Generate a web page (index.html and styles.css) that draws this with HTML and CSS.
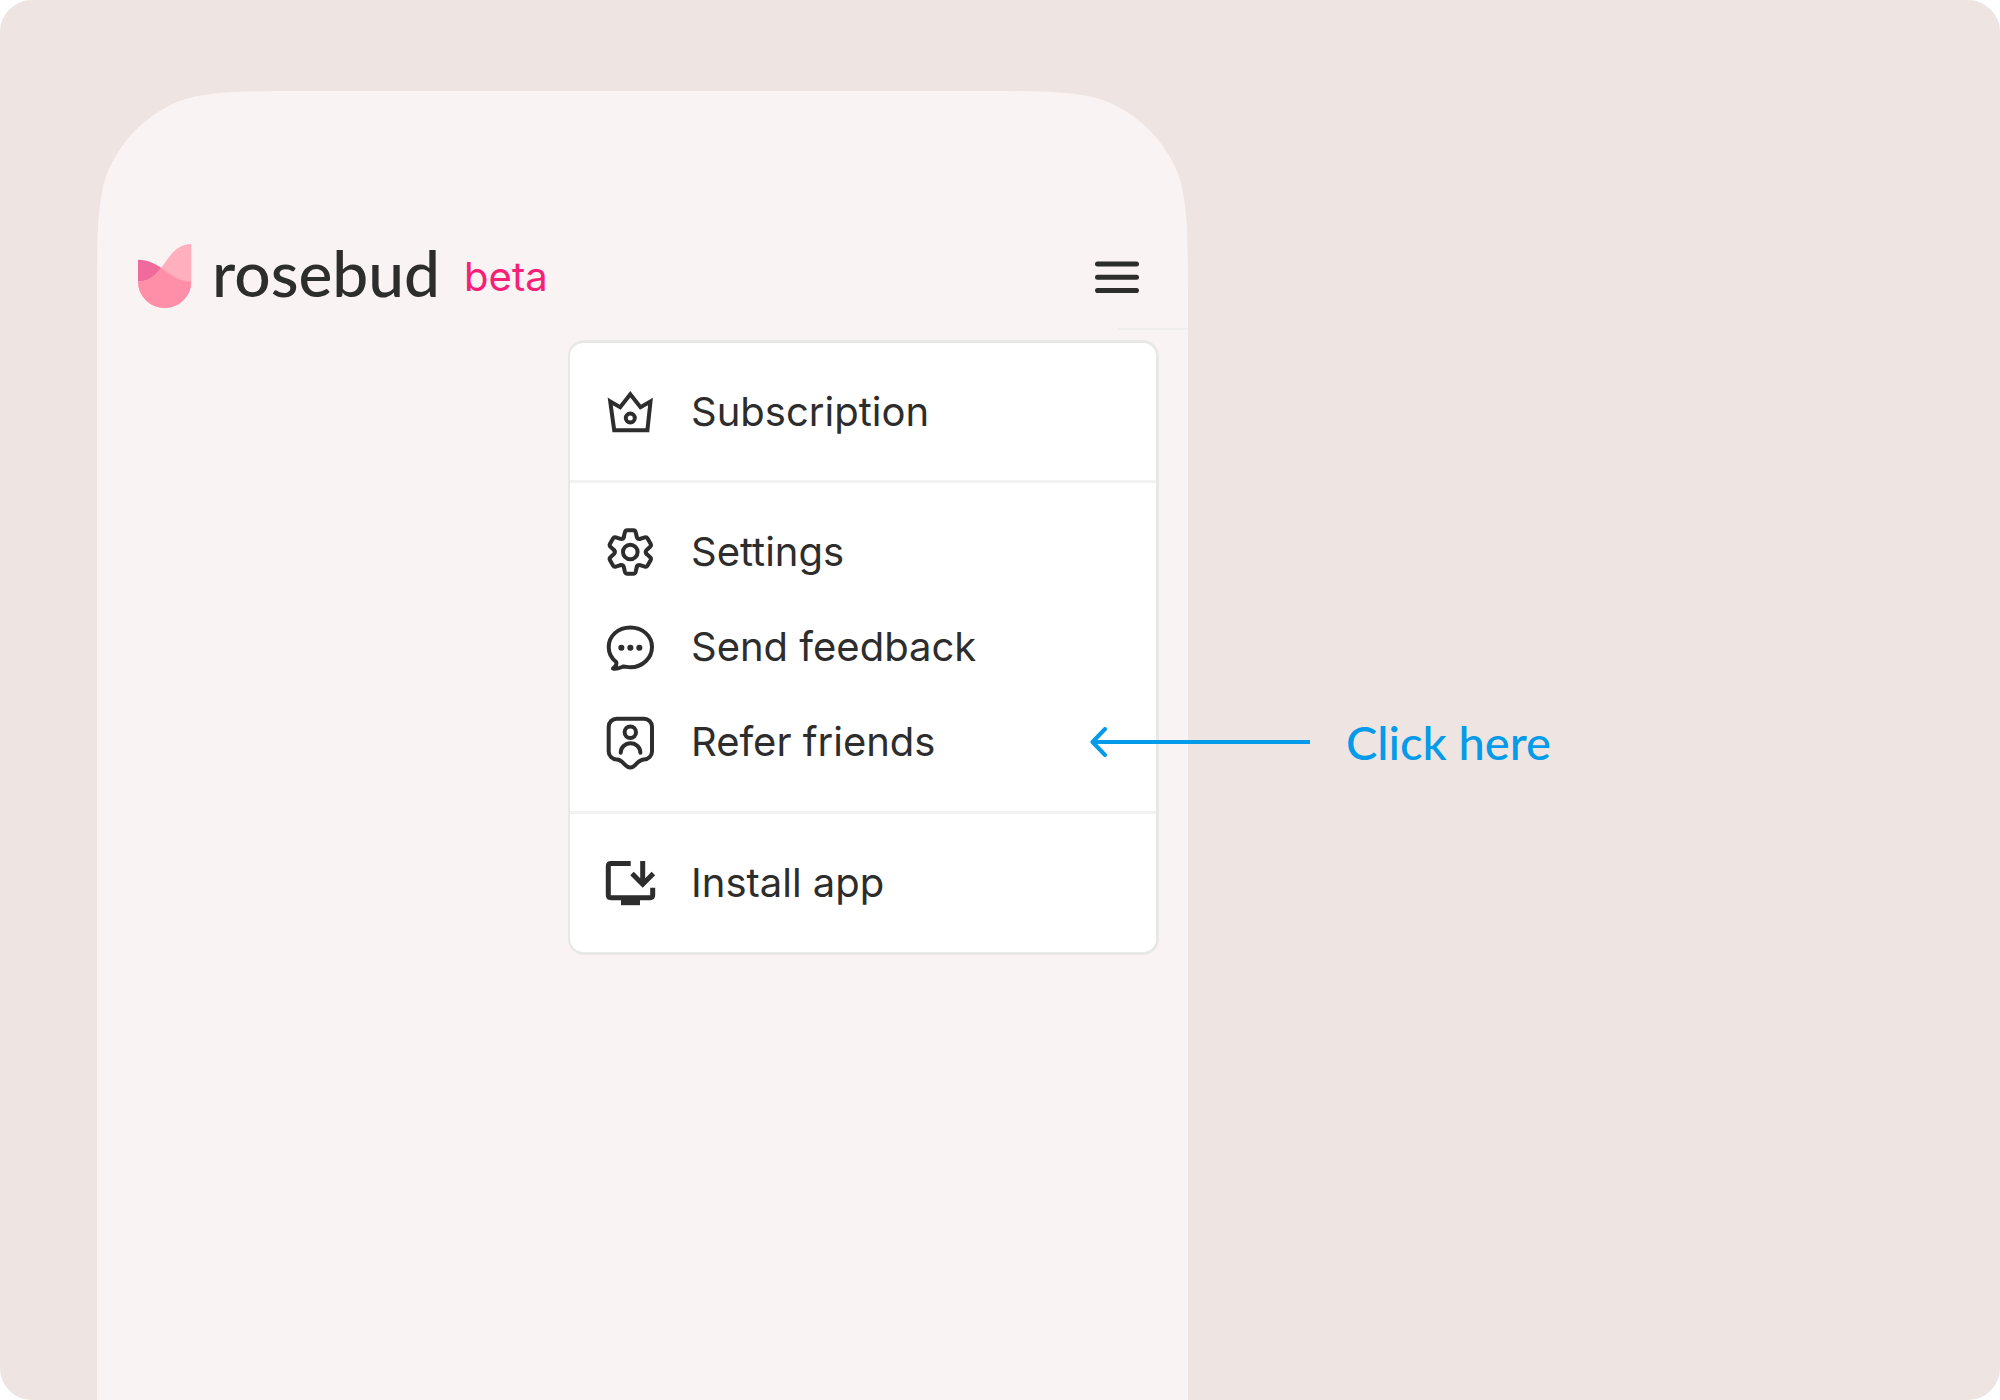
FILE: index.html
```
<!DOCTYPE html>
<html lang="en">
<head>
    <meta charset="UTF-8">
    <meta name="viewport" content="width=device-width, initial-scale=1.0">
    <title>Rosebud - Refer friends</title>
    <link rel="stylesheet" href="styles.css">
</head>
<body>
    <div class="stage">
        <div class="phone">
            <!-- Smooth phone corners -->
            <svg class="corner" viewBox="0 0 213 213" aria-hidden="true">
                <path d="M0 213C0 138.300 0 101 14.500 72.600A133 133 0 0 1 72.600 14.500C101 0 138.300 0 213 0H-2V213Z"/>
            </svg>
            <svg class="corner corner-right" viewBox="0 0 213 213" aria-hidden="true">
                <path d="M0 213C0 138.300 0 101 14.500 72.600A133 133 0 0 1 72.600 14.500C101 0 138.300 0 213 0H-2V213Z"/>
            </svg>

            <header class="header">
                <svg class="logo" viewBox="0 0 54 64" aria-hidden="true">
                    <defs>
                        <clipPath id="bud">
                            <path d="M53.300 0C27 0 27 37.500 0 37.500A26.650 26.500 0 0 0 53.300 37.500Z"/>
                        </clipPath>
                    </defs>
                    <path fill="#f06b9b" d="M0 15.800C24 15.800 30 37.500 53.300 37.500H0Z"/>
                    <path fill="#ffafbd" d="M53.300 0C27 0 27 37.500 0 37.500A26.650 26.500 0 0 0 53.300 37.500Z"/>
                    <path fill="#ff8fa8" clip-path="url(#bud)" d="M0 15.800C24 15.800 30 37.500 53.300 37.500V64H0Z"/>
                </svg>
                <span class="wordmark">rosebud</span>
                <span class="beta">beta</span>
                <button class="menu-button" type="button" aria-label="Menu">
                    <svg viewBox="0 0 44 32" aria-hidden="true">
                        <path d="M2.500 3H41.500M2.500 16.300H41.500M2.500 29.600H41.500"/>
                    </svg>
                </button>
            </header>

            <nav class="menu">
                <ul class="group">
                    <li class="item">
                        <button class="entry" type="button">
                            <svg class="icon crown" viewBox="0 0 48 48" aria-hidden="true">
                                <path d="M4.200 13.400L14.200 19.200L24.300 6.300L34.500 19.200L44.500 13.400L41.400 42.300H8.200Z"/>
                                <circle cx="24.300" cy="30" r="4.500"/>
                            </svg>
                            Subscription
                        </button>
                    </li>
                </ul>
                <ul class="group">
                    <li class="item">
                        <button class="entry" type="button">
                            <svg class="icon" viewBox="0 0 48 48" aria-hidden="true">
                                <defs>
                                    <path id="tooth" d="M-6.500 -15L-5.400 -19.800Q-4.900 -21.700 -3 -21.700H3Q4.900 -21.700 5.400 -19.800L6.500 -15Q7.400 -12.600 9.700 -13.100"/>
                                </defs>
                                <g transform="translate(24.300 24)">
                                    <use href="#tooth"/>
                                    <use href="#tooth" transform="rotate(60)"/>
                                    <use href="#tooth" transform="rotate(120)"/>
                                    <use href="#tooth" transform="rotate(180)"/>
                                    <use href="#tooth" transform="rotate(240)"/>
                                    <use href="#tooth" transform="rotate(300)"/>
                                    <circle r="7.300"/>
                                </g>
                            </svg>
                            Settings
                        </button>
                    </li>
                    <li class="item">
                        <button class="entry" type="button">
                            <svg class="icon" viewBox="0 0 48 48" aria-hidden="true">
                                <path d="M10.200 39C5 35 2.700 30 2.700 24C2.700 13 12 4.500 24.300 4.500S46 13 46 24S36.500 44.300 24.300 44.300C21.500 44.300 19 43.300 17 43.600C14 44.800 11 46.300 7 45.600C9.500 43.500 11.300 41.500 10.200 39Z"/>
                                <path class="dots" d="M15.300 24.700h.1M24.300 24.700h.1M33.300 24.700h.1"/>
                            </svg>
                            Send feedback
                        </button>
                    </li>
                    <li class="item">
                        <button class="entry" type="button">
                            <svg class="icon" viewBox="0 0 48 48" aria-hidden="true">
                                <path d="M10.800 .7H37.900A8 8 0 0 1 46 8.700V33.500A8 8 0 0 1 37.900 41.500C33 41.500 31.500 45.500 27.500 48.500Q24.300 50.300 21.100 48.500C17 45.500 15.500 41.500 10.800 41.500A8 8 0 0 1 2.700 33.500V8.700A8 8 0 0 1 10.800 .7Z"/>
                                <circle cx="24.300" cy="14.300" r="5.700"/>
                                <path d="M14.700 34.800A9.850 9.600 0 0 1 34.400 34.800"/>
                            </svg>
                            Refer friends
                        </button>
                        <div class="callout">
                            <svg class="arrow" viewBox="0 0 220 30" aria-hidden="true">
                                <path d="M220 15H3"/>
                                <path class="head" d="M15 2L2.500 15L15 28"/>
                            </svg>
                            <span>Click here</span>
                        </div>
                    </li>
                </ul>
                <ul class="group">
                    <li class="item">
                        <button class="entry" type="button">
                            <svg class="icon install" viewBox="0 0 48 48" aria-hidden="true">
                                <path d="M24.700 4.500H5Q2.300 4.500 2.300 7.200V36Q2.300 38.700 5 38.700H44Q46.700 38.700 46.700 36V28.800"/>
                                <path d="M36.700 2V25.300M26 14.600L36.700 25.300L47.400 14.600"/>
                                <path class="solid" d="M15 39H34V46.200H15Z"/>
                            </svg>
                            Install app
                        </button>
                    </li>
                </ul>
            </nav>
        </div>
    </div>
</body>
</html>
```
FILE: styles.css
```
* { box-sizing: border-box; }

body {
    margin: 0;
    background: #fff;
    color: #2d2d2d;
    font-family: Inter, sans-serif;
}

.stage {
    display: flex;
    min-height: 100vh;
    padding: 91px 0 0 97px;
    border-radius: 32px;
    background: #eee4e2;
}

.stage::after { content: ""; flex: 812; }

.phone {
    position: relative;
    flex: 1091;
    background: #f9f3f3;
}

.corner {
    position: absolute;
    top: 0;
    left: 0;
    width: 213px;
    fill: #eee4e2;
}
/* the outline is filled as the area outside of the curve */
.corner-right { left: auto; right: 0; transform: scaleX(-1); }

.header {
    position: relative;
    display: flex;
    align-items: center;
    padding: 153px 49px 18px 41px;
}
.header::after {
    content: "";
    position: absolute;
    right: 0;
    top: 100%;
    width: 70px;
    height: 2px;
    background: #f0eeed;
}

.logo { width: 54px; height: 64px; margin-bottom: 2px; }

.wordmark {
    margin: 0 0 8px 20px;
    font: 500 64px/54px Lato, sans-serif;
}

.beta {
    margin-left: 24px;
    color: #f72077;
    font-size: 40px;
    line-height: 48px;
}

.menu-button {
    margin-left: auto;
    padding: 0;
    border: 0;
    background: none;
    cursor: pointer;
}
.menu-button svg {
    display: block;
    width: 44px;
    stroke: #2d2d2d;
    stroke-width: 5;
    stroke-linecap: round;
}

.menu {
    width: 591px;
    margin: 12px 29px 0 auto;
    border: 3px solid #e8e8e8;
    border-left-width: 2px;
    border-radius: 16px;
    background: #fff;
}

.group {
    margin: 0;
    padding: 21px 0 22px;
    list-style: none;
}
.group:first-child { padding-bottom: 21px; }
.group + .group { border-top: 3px solid #f2f2f2; }

.item { position: relative; }

.entry {
    display: flex;
    align-items: center;
    gap: 37px;
    width: 100%;
    height: 95px;
    padding: 0 36px;
    border: 0;
    background: none;
    color: inherit;
    font: 400 40px/48px Inter, sans-serif;
    cursor: pointer;
}

.icon {
    width: 48px;
    height: 48px;
    overflow: visible;
    fill: none;
    stroke: #2d2d2d;
    stroke-width: 4;
    stroke-linecap: round;
    stroke-linejoin: round;
}
.crown { stroke-linecap: butt; stroke-linejoin: miter; }
.install { stroke-width: 5; stroke-linecap: butt; stroke-linejoin: miter; }
.solid { fill: #2d2d2d; stroke: none; }
.dots { stroke-width: 6; }

/* Annotation over the edge of the phone */
.callout {
    position: absolute;
    top: 0;
    left: 100%;
    display: flex;
    align-items: center;
    gap: 36px;
    height: 100%;
    margin-left: -66px;
    color: #049beb;
    font: 500 47px/56px Lato, sans-serif;
    white-space: nowrap;
}
.arrow {
    width: 220px;
    fill: none;
    stroke: #049beb;
    stroke-width: 4;
}
.head { stroke-linecap: round; stroke-linejoin: round; }
```
